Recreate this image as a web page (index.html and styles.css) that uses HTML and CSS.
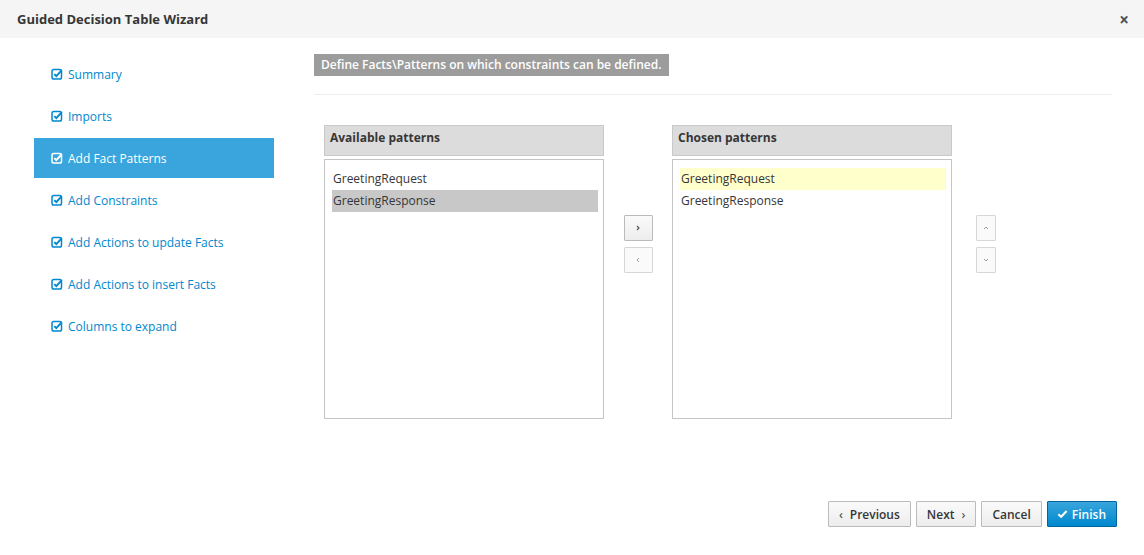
FILE: index.html
```html
<!DOCTYPE html>
<html>
<head>
<meta charset="utf-8">
<link rel="stylesheet" href="styles.css">
</head>
<body>
<div class="modal">
  <div class="header">
    <span class="title">Guided Decision Table Wizard</span>
    <span class="close">&#215;</span>
  </div>
  <div class="content">
    <ul class="nav">
      <li class="nav-item"><svg class="chk" viewBox="0 0 12 12"><rect x="1" y="1.5" width="9.5" height="9.5" rx="1.8" fill="none" stroke="currentColor" stroke-width="1.5"/><path d="M3.3 6.2 L5.3 8.2 L10.8 2.2" fill="none" stroke="currentColor" stroke-width="1.9"/></svg>Summary</li>
      <li class="nav-item"><svg class="chk" viewBox="0 0 12 12"><rect x="1" y="1.5" width="9.5" height="9.5" rx="1.8" fill="none" stroke="currentColor" stroke-width="1.5"/><path d="M3.3 6.2 L5.3 8.2 L10.8 2.2" fill="none" stroke="currentColor" stroke-width="1.9"/></svg>Imports</li>
      <li class="nav-item active"><svg class="chk" viewBox="0 0 12 12"><rect x="1" y="1.5" width="9.5" height="9.5" rx="1.8" fill="none" stroke="currentColor" stroke-width="1.5"/><path d="M3.3 6.2 L5.3 8.2 L10.8 2.2" fill="none" stroke="currentColor" stroke-width="1.9"/></svg>Add Fact Patterns</li>
      <li class="nav-item"><svg class="chk" viewBox="0 0 12 12"><rect x="1" y="1.5" width="9.5" height="9.5" rx="1.8" fill="none" stroke="currentColor" stroke-width="1.5"/><path d="M3.3 6.2 L5.3 8.2 L10.8 2.2" fill="none" stroke="currentColor" stroke-width="1.9"/></svg>Add Constraints</li>
      <li class="nav-item"><svg class="chk" viewBox="0 0 12 12"><rect x="1" y="1.5" width="9.5" height="9.5" rx="1.8" fill="none" stroke="currentColor" stroke-width="1.5"/><path d="M3.3 6.2 L5.3 8.2 L10.8 2.2" fill="none" stroke="currentColor" stroke-width="1.9"/></svg>Add Actions to update Facts</li>
      <li class="nav-item"><svg class="chk" viewBox="0 0 12 12"><rect x="1" y="1.5" width="9.5" height="9.5" rx="1.8" fill="none" stroke="currentColor" stroke-width="1.5"/><path d="M3.3 6.2 L5.3 8.2 L10.8 2.2" fill="none" stroke="currentColor" stroke-width="1.9"/></svg>Add Actions to insert Facts</li>
      <li class="nav-item"><svg class="chk" viewBox="0 0 12 12"><rect x="1" y="1.5" width="9.5" height="9.5" rx="1.8" fill="none" stroke="currentColor" stroke-width="1.5"/><path d="M3.3 6.2 L5.3 8.2 L10.8 2.2" fill="none" stroke="currentColor" stroke-width="1.9"/></svg>Columns to expand</li>
    </ul>
    <div class="main">
      <div class="desc">Define Facts\Patterns on which constraints can be defined.</div>
      <div class="rule"></div>
      <div class="chooser">
        <div class="panel">
          <div class="panel-head">Available patterns</div>
          <div class="list">
            <div class="item">GreetingRequest</div>
            <div class="item sel-gray">GreetingResponse</div>
          </div>
        </div>
        <div class="mid">
          <button class="sbtn"><svg viewBox="0 0 10 10"><path d="M4 3 L6 5 L4 7" fill="none" stroke="#4d5258" stroke-width="1.1"/></svg></button>
          <button class="sbtn dis"><svg viewBox="0 0 10 10"><path d="M6 3 L4 5 L6 7" fill="none" stroke="#9a9c9e" stroke-width="1"/></svg></button>
        </div>
        <div class="panel">
          <div class="panel-head">Chosen patterns</div>
          <div class="list">
            <div class="item sel-yellow">GreetingRequest</div>
            <div class="item">GreetingResponse</div>
          </div>
        </div>
        <div class="updown">
          <button class="ubtn"><svg viewBox="0 0 10 10"><path d="M3 6 L5 4 L7 6" fill="none" stroke="#9a9c9e" stroke-width="1"/></svg></button>
          <button class="ubtn"><svg viewBox="0 0 10 10"><path d="M3 4 L5 6 L7 4" fill="none" stroke="#9a9c9e" stroke-width="1"/></svg></button>
        </div>
      </div>
    </div>
  </div>
  <div class="footer">
    <button class="btn"><span class="ang">&#8249;</span>Previous</button>
    <button class="btn">Next<span class="ang r">&#8250;</span></button>
    <button class="btn">Cancel</button>
    <button class="btn primary"><svg class="tick" viewBox="0 0 12 10"><path d="M1.5 5.2 L4.5 8 L10.5 1.8" fill="none" stroke="#fff" stroke-width="2.2"/></svg>Finish</button>
  </div>
</div>
</body>
</html>
```

FILE: styles.css
```css
* { box-sizing: border-box; }
html, body { margin: 0; padding: 0; background: #fff; }
body {
  font-family: "Open Sans", "Noto Sans", sans-serif;
  font-size: 12px;
  color: #363636;
  width: 1144px;
  height: 555px;
  overflow: hidden;
}
.modal { display: flex; flex-direction: column; height: 555px; }
.header {
  height: 38px;
  background: #f5f5f5;
  display: flex;
  align-items: center;
  justify-content: space-between;
  padding: 0 15px 0 17px;
}
.title { font-size: 13px; font-weight: 700; color: #363636; }
.close { font-size: 17px; font-weight: 700; color: #4d5258; line-height: 1; }
.content { display: flex; flex: 1; padding-top: 16px; }
.nav {
  list-style: none;
  margin: 0 0 0 34px;
  padding: 0;
  width: 240px;
  display: flex;
  flex-direction: column;
  gap: 2px;
}
.nav-item {
  height: 40px;
  display: flex;
  align-items: center;
  padding-left: 17px;
  color: #0088ce;
}
.nav-item.active { background: #39a5dc; color: #fff; }
.chk { width: 12px; height: 12px; margin-right: 5px; flex: none; }
.main { margin-left: 40px; width: 798px; }
.desc {
  display: inline-block;
  background: #9c9c9c;
  color: #fff;
  font-weight: 600;
  height: 22px;
  line-height: 22px;
  padding: 0 7px;
}
.rule { height: 1px; background: #ededed; margin-top: 18px; }
.chooser { display: flex; margin: 30px 0 0 10px; }
.panel { width: 280px; display: flex; flex-direction: column; gap: 3px; }
.panel-head {
  height: 31px;
  background: #dcdcdc;
  border: 1px solid #c9c9c9;
  font-weight: 700;
  padding: 3px 5px 0;
}
.list {
  height: 260px;
  border: 1px solid #c4c4c4;
  padding: 8px 5px 0 7px;
}
.item { height: 22px; line-height: 22px; padding-left: 1px; color: #363636; }
.sel-gray { background: #c8c8c8; }
.sel-yellow { background: #ffffcc; }
.mid {
  width: 68px;
  display: flex;
  flex-direction: column;
  align-items: center;
  gap: 6px;
  padding-top: 90px;
}
.sbtn, .ubtn {
  margin: 0;
  padding: 0;
  display: flex;
  align-items: center;
  justify-content: center;
  border: 1px solid #bbb;
  border-radius: 1px;
  background: linear-gradient(#fafafa, #ededed);
}
.sbtn { width: 29px; height: 26px; }
.sbtn svg, .ubtn svg { width: 10px; height: 10px; }
.sbtn.dis { background: #fafafa; border-color: #d7d7d7; }
.updown {
  margin-left: 24px;
  display: flex;
  flex-direction: column;
  gap: 6px;
  padding-top: 90px;
}
.ubtn { width: 20px; height: 26px; background: #fafafa; border-color: #d7d7d7; }
.footer {
  display: flex;
  justify-content: flex-end;
  gap: 5px;
  padding: 0 27px 28px 0;
}
.btn {
  font-family: "Open Sans", "Noto Sans", sans-serif;
  font-size: 12px;
  font-weight: 600;
  color: #363636;
  height: 26px;
  padding: 0 10px;
  border: 1px solid #bbb;
  border-radius: 1px;
  background: linear-gradient(#fafafa, #ededed);
  display: flex;
  align-items: center;
  margin: 0;
}
.ang { font-size: 13px; font-weight: 400; margin-right: 7px; }
.ang.r { margin: 0 0 0 7px; }
.btn.primary {
  color: #fff;
  background: linear-gradient(#39a5dc, #0088ce);
  border-color: #00659c;
  padding: 0 10px 0 9px;
}
.tick { width: 11px; height: 10px; margin-right: 4px; }
```
